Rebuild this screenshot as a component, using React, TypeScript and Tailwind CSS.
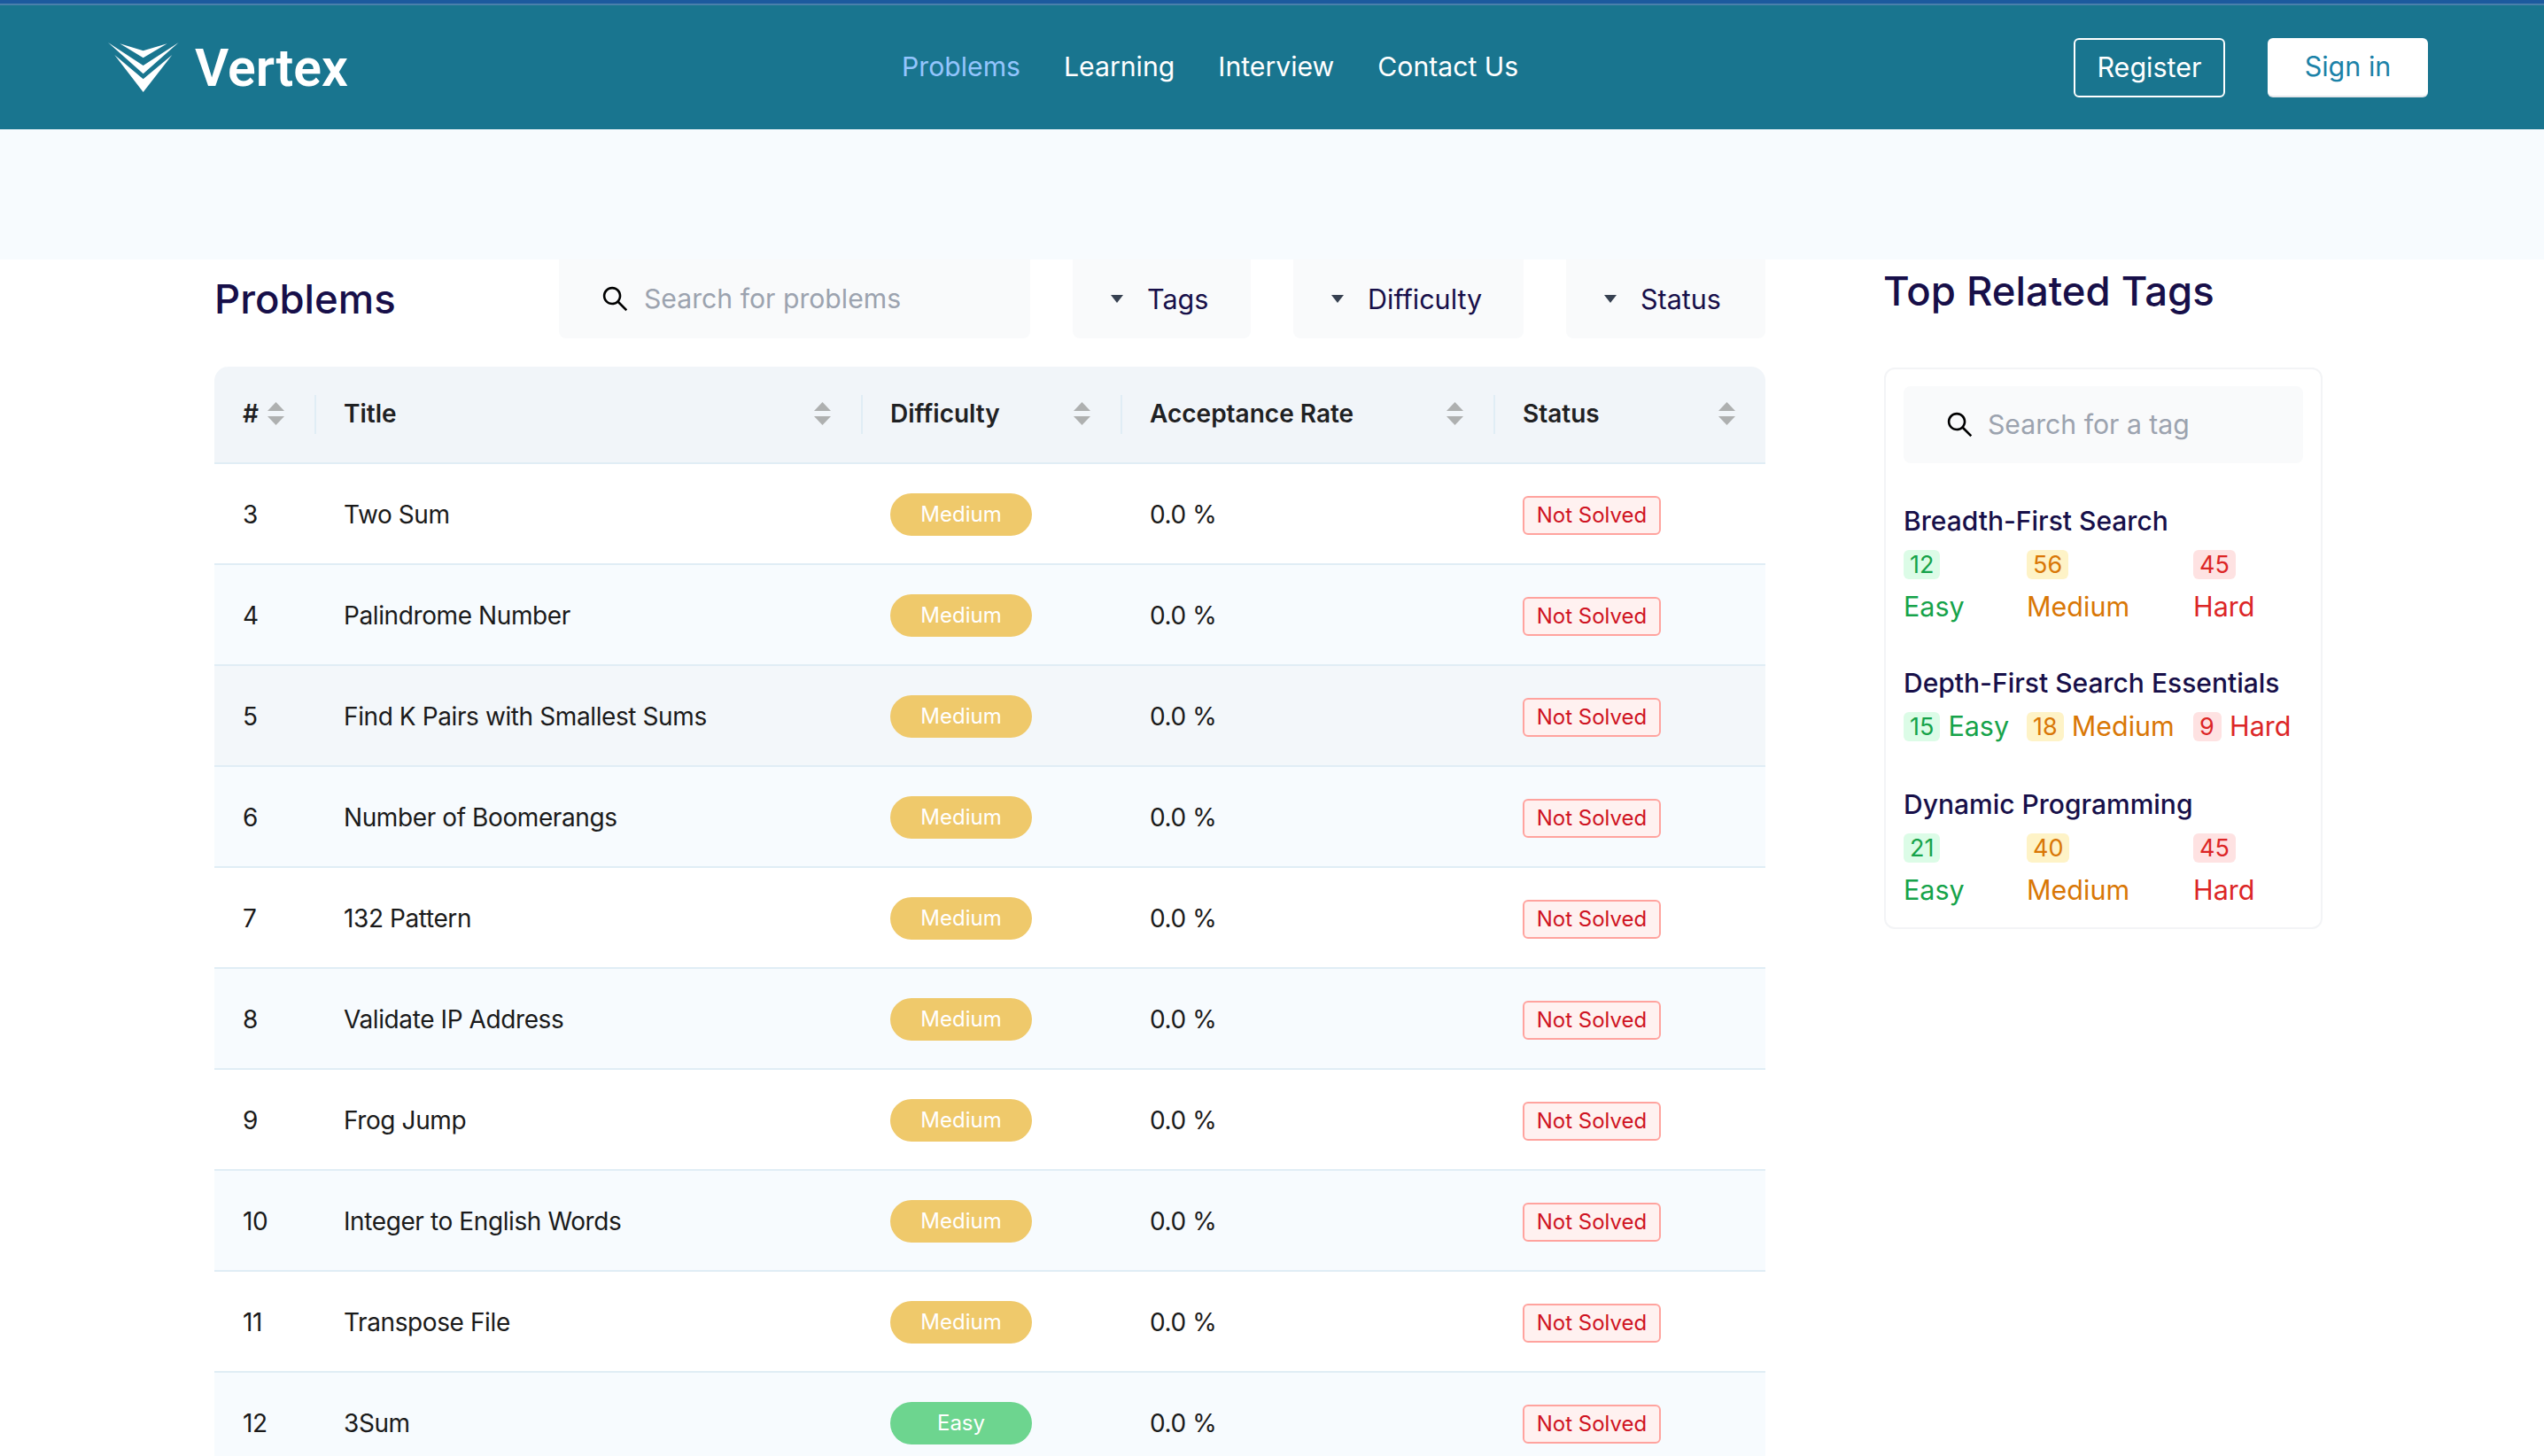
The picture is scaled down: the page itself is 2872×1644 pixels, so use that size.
import { AiOutlineSearch } from "react-icons/ai";

const navLinks = ["Learning", "Interview", "Contact Us"];

const rows = [
  { id: 3, title: "Two Sum", bg: "bg-white" },
  { id: 4, title: "Palindrome Number", bg: "bg-[#f7fbfe]" },
  { id: 5, title: "Find K Pairs with Smallest Sums", bg: "bg-[#f3f7fa]" },
  { id: 6, title: "Number of Boomerangs", bg: "bg-[#f7fbfe]" },
  { id: 7, title: "132 Pattern", bg: "bg-white" },
  { id: 8, title: "Validate IP Address", bg: "bg-[#f7fbfe]" },
  { id: 9, title: "Frog Jump", bg: "bg-white" },
  { id: 10, title: "Integer to English Words", bg: "bg-[#f7fbfe]" },
  { id: 11, title: "Transpose File", bg: "bg-white" },
  { id: 12, title: "3Sum", bg: "bg-[#f7fbfe]", easy: true },
];

const tagGroups = [
  { name: "Breadth-First Search", easy: 12, medium: 56, hard: 45 },
  { name: "Depth-First Search Essentials", easy: 15, medium: 18, hard: 9, inline: true },
  { name: "Dynamic Programming", easy: 21, medium: 40, hard: 45 },
];

const gridCols = "grid grid-cols-[113px_617px_293px_421px_307px]";

function Logo() {
  return (
    <svg width="80" height="56" viewBox="68 144 240 168" fill="#fff">
      <polygon points="108,148 187,172 268,148 187,196" />
      <polygon points="68,144 187,222 307,144 187,250" />
      <polygon points="90,186 187,268 285,186 187,312" />
    </svg>
  );
}

function SortCarets() {
  return (
    <svg width="19" height="26" viewBox="0 0 19 26" fill="#aeb0b0" className="shrink-0">
      <polygon points="9.5,0 19,10 0,10" />
      <polygon points="0,16 19,16 9.5,26" />
    </svg>
  );
}

function Caret() {
  return (
    <svg width="14" height="9" viewBox="0 0 14 9" fill="#374151" className="shrink-0">
      <polygon points="0,0 14,0 7,9" />
    </svg>
  );
}

function Filter({ label, width }: { label: string; width: string }) {
  return (
    <div className={`${width} h-[89px] flex items-center pl-[43px] gap-[27px] bg-[#f9fafb] rounded-b-lg text-[30.5px] text-[#170f49]`}>
      <Caret />
      <span className="pt-[1px]">{label}</span>
    </div>
  );
}

function HeaderCell({ label, divider }: { label: string; divider?: boolean }) {
  return (
    <div className="relative flex items-center justify-between pl-[33px] pr-[34px] pb-[2px] font-semibold text-[28px] text-[#1f2123]">
      {divider && <span className="absolute left-0 top-[32px] h-[44px] w-[2px] bg-[#e0edf5]" />}
      <span>{label}</span>
      <SortCarets />
    </div>
  );
}

function Count({ value, label, tone, inline }: { value: number; label: string; tone: "easy" | "medium" | "hard"; inline?: boolean }) {
  const badge = {
    easy: "bg-[#dcfce7] text-[#16a34a]",
    medium: "bg-[#fef3c7] text-[#d97706]",
    hard: "bg-[#fee2e2] text-[#dc2626]",
  }[tone];
  const text = {
    easy: "text-[#16a34a]",
    medium: "text-[#d97706]",
    hard: "text-[#dc2626]",
  }[tone];
  return (
    <div className={inline ? "flex items-center gap-[9px]" : "flex flex-col items-start gap-[11px]"}>
      <span className={`${badge} h-[33px] min-w-[32px] px-[7px] rounded-md flex items-center text-[27px] leading-none`}>{value}</span>
      <span className={`${text} text-[30.5px] leading-[40px]`}>{label}</span>
    </div>
  );
}

export default function App() {
  return (
    <div className="h-[1644px] overflow-hidden bg-white font-['Inter',sans-serif]">
      <div className="h-1 bg-[#1c5a9e]" />
      <div className="h-[2px] bg-[#4a80ab]" />
      <nav className="h-[140px] bg-[#19758f] flex items-center">
        <div className="w-[1018px] pl-[122px] flex items-center gap-[18px]">
          <Logo />
          <span className="font-['Roboto',sans-serif] font-semibold text-[59px] text-white leading-none">Vertex</span>
        </div>
        <div className="flex items-center gap-[49px] text-[30.2px] text-white">
          <span className="text-[#93c5fd]">Problems</span>
          {navLinks.map((l) => (
            <span key={l}>{l}</span>
          ))}
        </div>
        <div className="ml-auto mr-[131px] flex items-center gap-[48px] text-[30.5px]">
          <button className="w-[171px] h-[67px] rounded-md border-2 border-white text-white">Register</button>
          <button className="w-[181px] h-[67px] rounded-md bg-white border-b-2 border-[#e5e7eb] text-[#1b82a8]">Sign in</button>
        </div>
      </nav>
      <div className="h-[147px] bg-[#f7fbfe]" />

      <main className="flex pl-[242px]">
        <section className="w-[1751px]">
          <div className="flex items-center">
            <h1 className="w-[389px] text-[45.5px] font-medium text-[#170f49] leading-none">Problems</h1>
            <div className="w-[532px] h-[89px] flex items-center pl-[46px] gap-[15px] bg-[#f9fafb] rounded-b-lg text-[30.2px] text-[#9ca3af] mr-[48px]">
              <AiOutlineSearch size={35} color="#000" className="shrink-0" />
              <span className="pt-[1px]">Search for problems</span>
            </div>
            <div className="flex gap-[48px]">
              <Filter label="Tags" width="w-[201px]" />
              <Filter label="Difficulty" width="w-[260px]" />
              <Filter label="Status" width="w-[225px]" />
            </div>
          </div>

          <div className="mt-[32px]">
            <div className={`${gridCols} h-[110px] bg-[#f1f5f9] rounded-t-2xl border-b-2 border-[#e0edf5]`}>
              <div className="relative flex items-center gap-[10px] pl-[32px] pb-[2px] font-semibold text-[28px] text-[#1f2123]">
                <span>#</span>
                <SortCarets />
              </div>
              <HeaderCell label="Title" divider />
              <HeaderCell label="Difficulty" divider />
              <HeaderCell label="Acceptance Rate" divider />
              <HeaderCell label="Status" divider />
            </div>
            {rows.map((r) => (
              <div key={r.id} className={`${gridCols} h-[114px] pt-[1px] ${r.bg} border-b-2 border-[#e0edf5] text-[28px] tracking-[-0.4px] text-[#1a1a1a] items-center`}>
                <div className="pl-[32px]">{r.id}</div>
                <div className="pl-[33px]">{r.title}</div>
                <div className="pl-[33px] tracking-normal">
                  <span className={`${r.easy ? "bg-[#6dd58f]" : "bg-[#efc96b]"} w-[160px] h-[48px] rounded-full flex items-center justify-center text-white text-[24px]`}>
                    {r.easy ? "Easy" : "Medium"}
                  </span>
                </div>
                <div className="pl-[33px]">0.0 %</div>
                <div className="pl-[33px] pt-[2px] tracking-normal">
                  <span className="flex w-[156px] h-[44px] items-center justify-center rounded-md border-2 border-[#ffa39e] bg-[#fff1f0] text-[#cf1322] text-[24px]">
                    Not Solved
                  </span>
                </div>
              </div>
            ))}
          </div>
        </section>

        <aside className="ml-[134px] w-[495px]">
          <h2 className="h-[122px] pt-[7px] -ml-[1px] text-[45.5px] font-medium text-[#170f49] leading-[58px]">Top Related Tags</h2>
          <div className="h-[634px] rounded-xl border-2 border-[#f3f4f6] px-[20px] pt-[19px]">
            <div className="h-[87px] flex items-center pl-[46px] gap-[14px] bg-[#f9fafb] rounded-lg text-[30.2px] text-[#9ca3af]">
              <AiOutlineSearch size={35} color="#000" className="shrink-0" />
              <span className="pt-[1px]">Search for a tag</span>
            </div>
            <div className="mt-[45px] flex flex-col gap-[46px]">
              {tagGroups.map((g) => (
                <div key={g.name} className={g.inline ? "pb-[2px]" : ""}>
                  <div className={`text-[30px] leading-[40px] font-medium text-[#170f49] whitespace-nowrap ${g.inline ? "mb-[9px]" : "mb-[13px]"}`}>{g.name}</div>
                  <div className="grid grid-cols-[139px_188px_1fr]">
                    <Count value={g.easy} label="Easy" tone="easy" inline={g.inline} />
                    <Count value={g.medium} label="Medium" tone="medium" inline={g.inline} />
                    <Count value={g.hard} label="Hard" tone="hard" inline={g.inline} />
                  </div>
                </div>
              ))}
            </div>
          </div>
        </aside>
      </main>
    </div>
  );
}
